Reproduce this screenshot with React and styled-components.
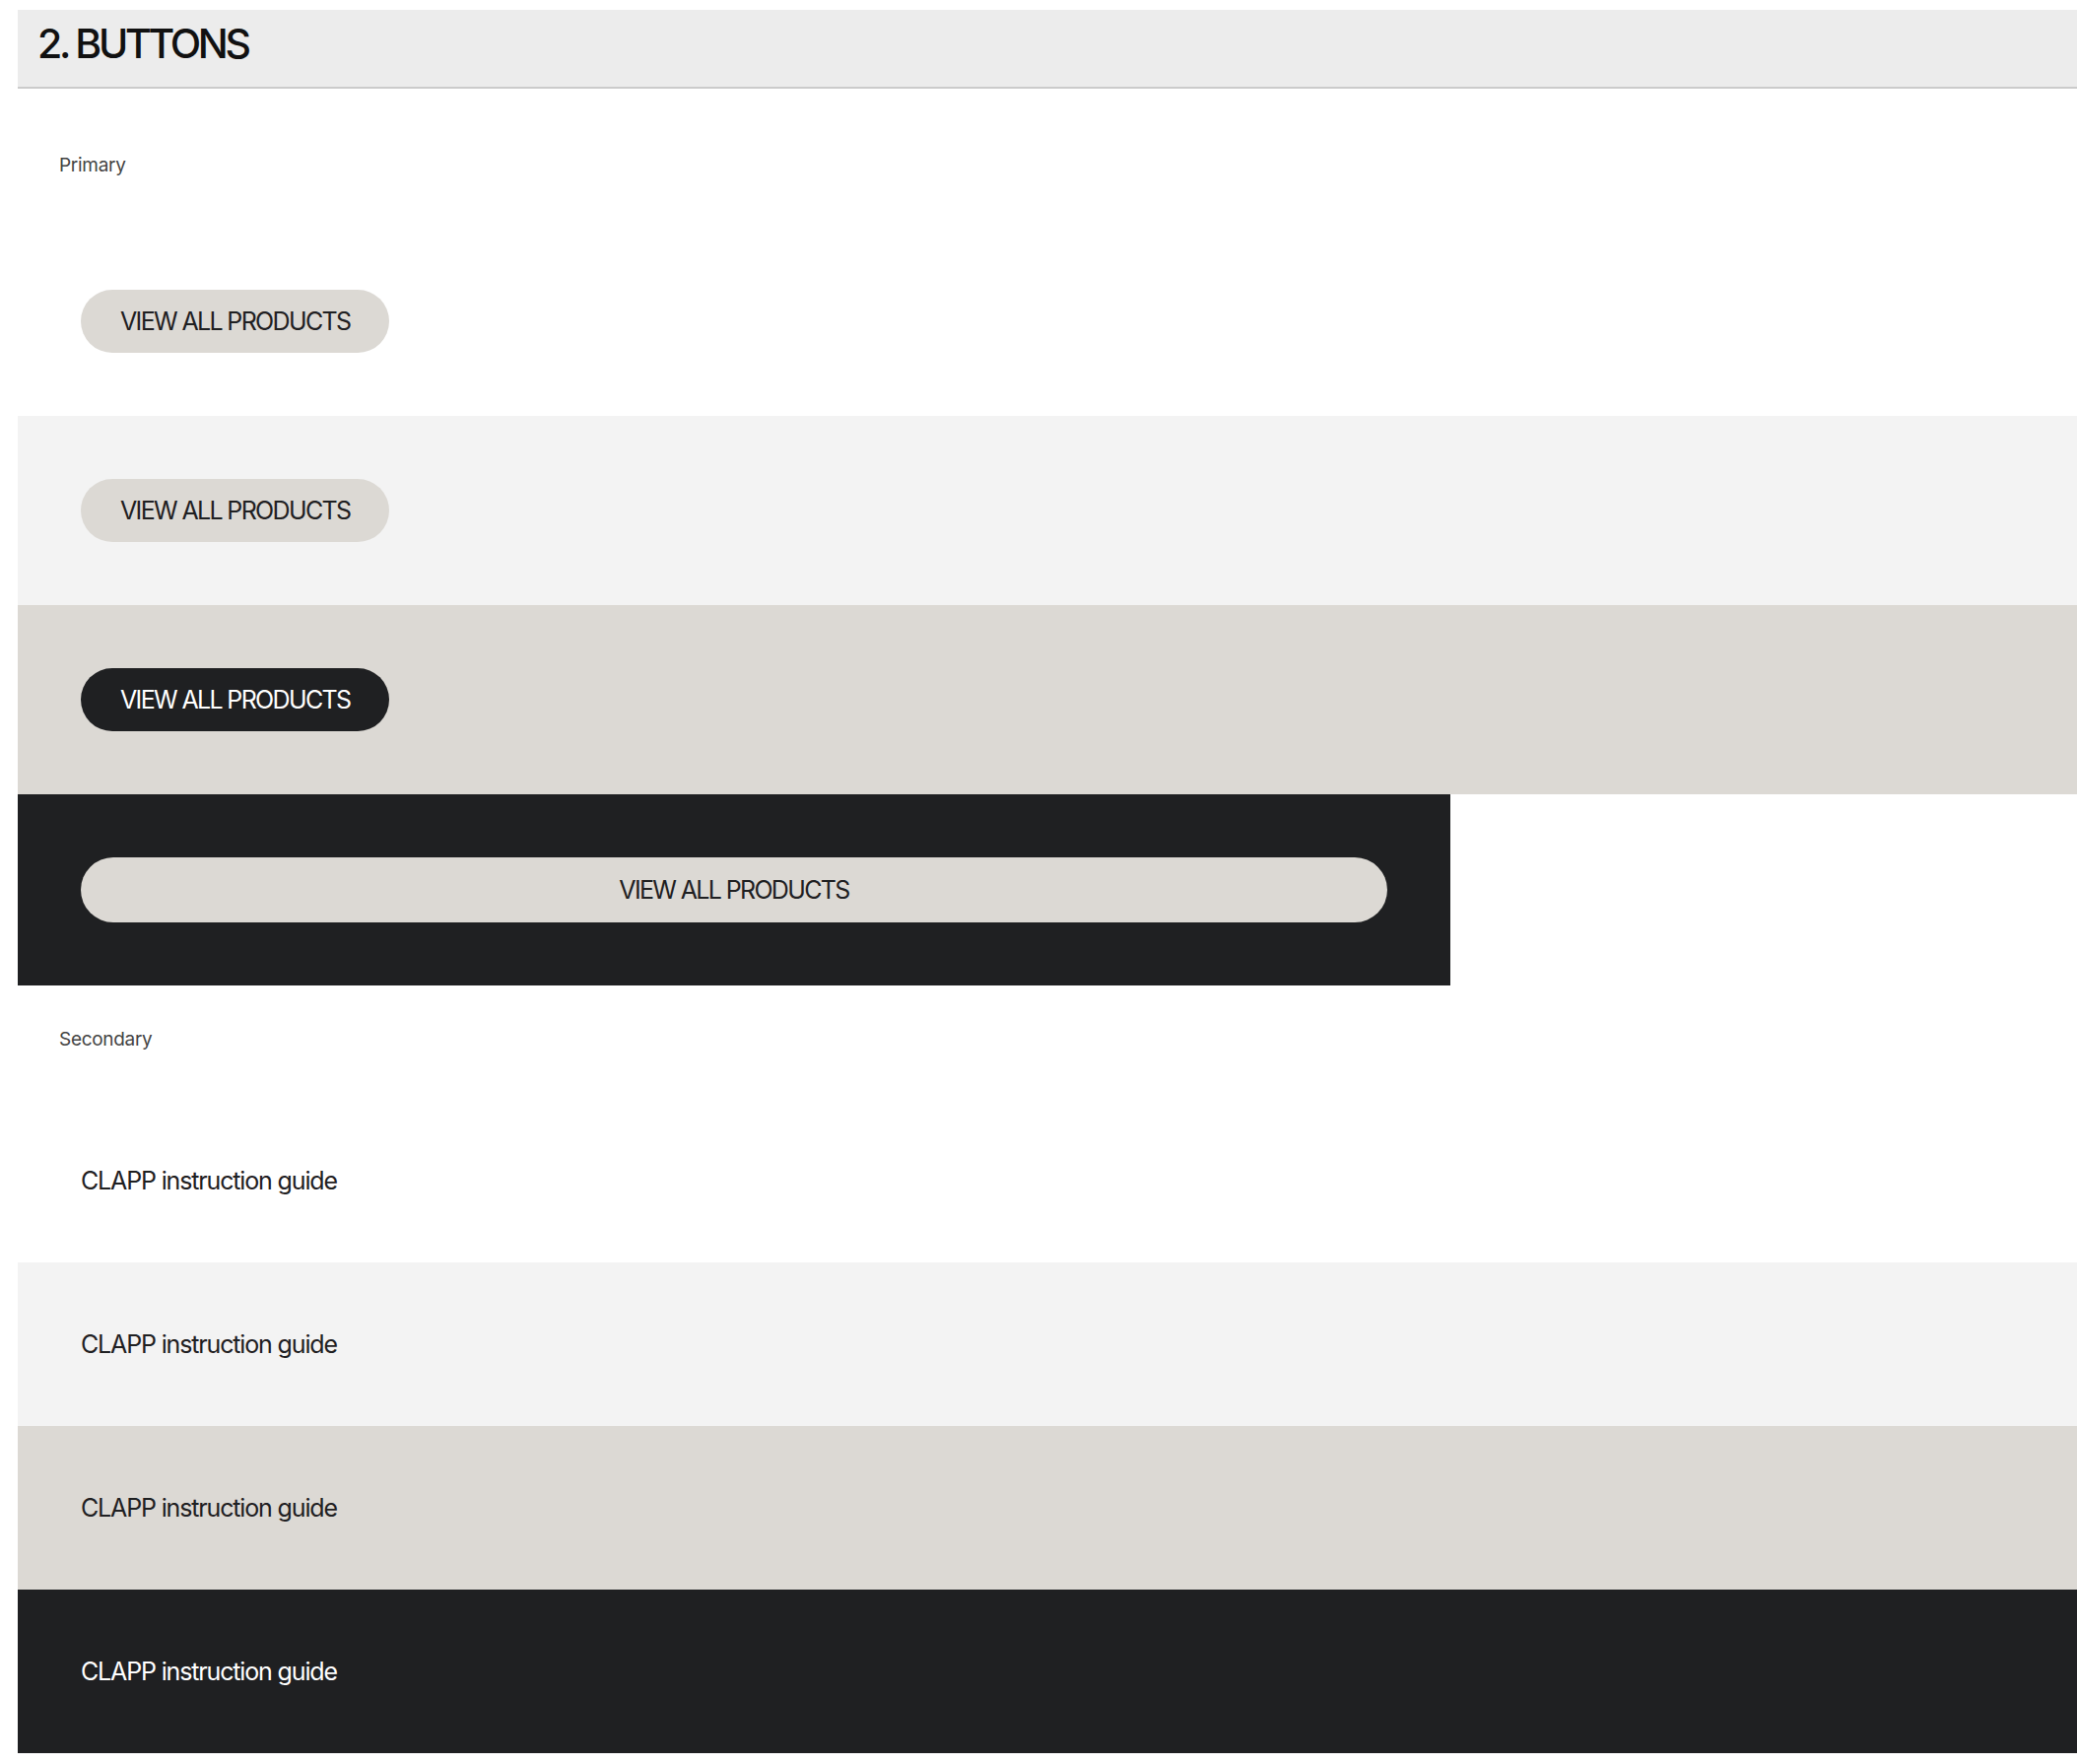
import styled, { createGlobalStyle } from "styled-components";

const GlobalStyle = createGlobalStyle`
  body {
    margin: 0;
    background: #ffffff;
    font-family: Inter, "Noto Sans", sans-serif;
    color: #1f2022;
  }
`;

const colors = {
  white: "#ffffff",
  light: "#f3f3f3",
  sand: "#dcd9d4",
  dark: "#1f2022",
};

const Page = styled.div`
  padding: 10px 0 10px 18px;
`;

const SectionHeader = styled.header`
  height: 80px;
  background: #ececec;
  border-bottom: 2px solid #cbcbcb;
  display: flex;
  align-items: center;
  padding: 0 20px 10px;
  box-sizing: border-box;
`;

const SectionTitle = styled.h2`
  margin: 0;
  font-size: 41px;
  font-weight: 500;
  letter-spacing: -3.3px;
  color: #111111;
`;

const Label = styled.div`
  padding: ${(p) => p.$top}px 42px ${(p) => p.$bottom}px;
  font-size: 19px;
  line-height: 24px;
  letter-spacing: -0.3px;
  color: #444444;
`;

const Row = styled.div`
  display: flex;
  align-items: center;
  background: ${(p) => colors[p.$bg]};
  padding: 64px;
  width: ${(p) => (p.$narrow ? "1454px" : "auto")};
  box-sizing: border-box;
`;

const PillButton = styled.button`
  height: ${(p) => (p.$block ? "66px" : "64px")};
  width: ${(p) => (p.$block ? "100%" : "auto")};
  padding: 0 40px;
  border: none;
  border-radius: 40px;
  background: ${(p) => (p.$inverse ? colors.dark : colors.sand)};
  color: ${(p) => (p.$inverse ? "#ffffff" : colors.dark)};
  font-family: Inter, "Noto Sans", sans-serif;
  font-size: 25px;
  font-weight: 400;
  letter-spacing: -1.65px;
  text-transform: uppercase;
  cursor: pointer;
`;

const TextButton = styled.a`
  display: block;
  font-size: 25px;
  line-height: 38px;
  letter-spacing: -1.15px;
  color: ${(p) => (p.$inverse ? "#ffffff" : colors.dark)};
  text-decoration: none;
  cursor: pointer;
`;

const primaryRows = [
  { bg: "white" },
  { bg: "light" },
  { bg: "sand", inverse: true },
];

const secondaryRows = [
  { bg: "white" },
  { bg: "light" },
  { bg: "sand" },
  { bg: "dark", inverse: true },
];

export default function App() {
  return (
    <>
      <GlobalStyle />
      <Page>
        <SectionHeader>
          <SectionTitle>2. BUTTONS</SectionTitle>
        </SectionHeader>

        <Label $top={66} $bottom={50}>
          Primary
        </Label>
        {primaryRows.map((row, i) => (
          <Row key={i} $bg={row.bg}>
            <PillButton $inverse={row.inverse}>View all products</PillButton>
          </Row>
        ))}
        <Row $bg="dark" $narrow>
          <PillButton $block>View all products</PillButton>
        </Row>

        <Label $top={43} $bottom={48}>
          Secondary
        </Label>
        {secondaryRows.map((row, i) => (
          <Row key={i} $bg={row.bg}>
            <TextButton $inverse={row.inverse}>CLAPP instruction guide</TextButton>
          </Row>
        ))}
      </Page>
    </>
  );
}
